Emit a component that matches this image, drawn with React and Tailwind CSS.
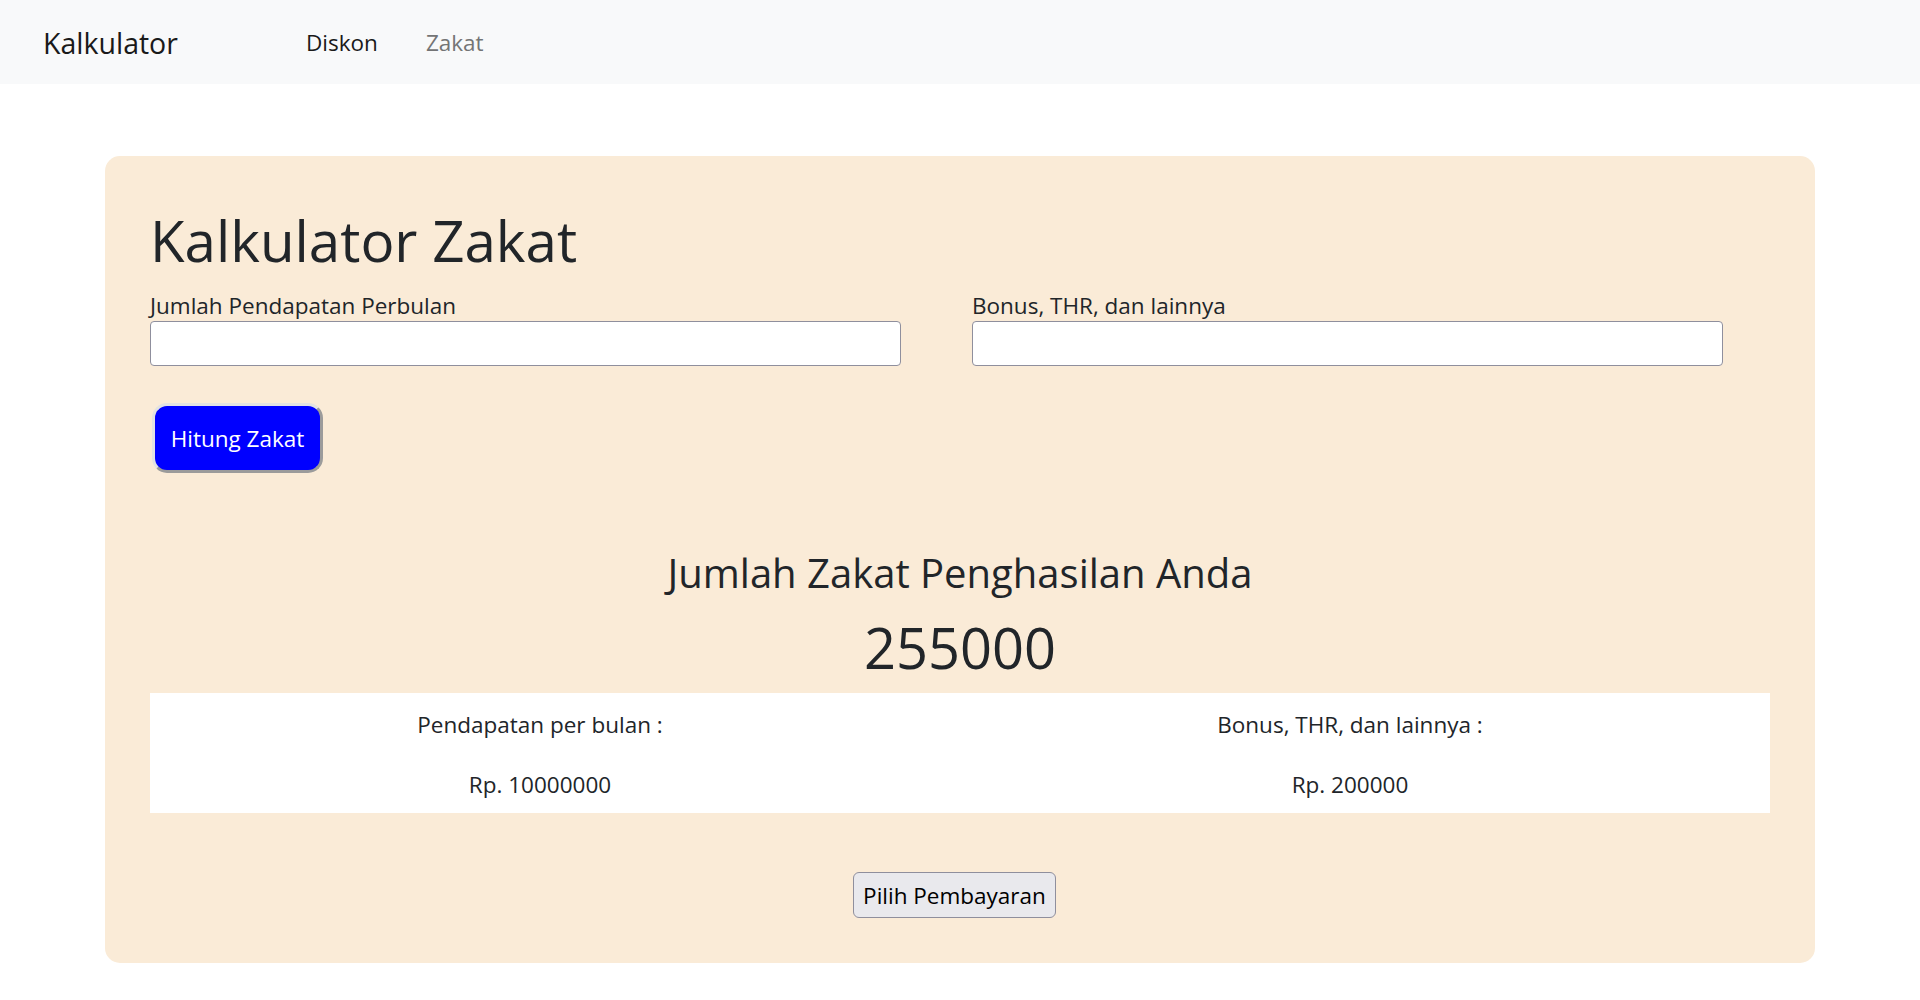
import { useState } from "react";

function App() {
  const [pendapatan, setPendapatan] = useState("");
  const [bonus, setBonus] = useState("");

  return (
    <div className="min-h-screen bg-white font-['Open_Sans',sans-serif] text-[#212529]">
      {/* navbar */}
      <nav className="flex h-[84px] items-center bg-[#f8f9fa] pl-[43px] pt-[2px]">
        <div className="w-[263px] text-[28.5px] leading-[45px] text-[#1a1a1a]">Kalkulator</div>
        <a className="text-[22.5px] leading-[36px] text-[#1a1a1a]">Diskon</a>
        <a className="ml-[48px] text-[22.5px] leading-[36px] text-[#737475]">Zakat</a>
      </nav>

      <div className="mx-auto mt-[72px] w-[1710px]">
        <div className="rounded-[15px] bg-[#faebd7] px-[45px] pt-[48px] pb-[45px]">
          <h1 className="mb-[9px] text-[56.5px] leading-[74px]">Kalkulator Zakat</h1>

          <div className="flex">
            <div className="w-[822px]">
              <label className="block h-[34px] pt-[2px] text-[22.5px] leading-[34px]">Jumlah Pendapatan Perbulan</label>
              <input
                value={pendapatan}
                onChange={(e) => setPendapatan(e.target.value)}
                className="h-[45px] w-[751px] rounded-[4px] border-[1.5px] border-[#8f8f9d] bg-white px-2 text-[22.5px]"
              />
            </div>
            <div>
              <label className="block h-[34px] pt-[2px] text-[22.5px] leading-[34px]">Bonus, THR, dan lainnya</label>
              <input
                value={bonus}
                onChange={(e) => setBonus(e.target.value)}
                className="h-[45px] w-[751px] rounded-[4px] border-[1.5px] border-[#8f8f9d] bg-white px-2 text-[22.5px]"
              />
            </div>
          </div>

          <button className="mt-[37px] ml-[2px] h-[70px] w-[171px] rounded-[15px] border-[3px] border-t-[#e2e2e2] border-l-[#e2e2e2] border-r-[#9b9b9b] border-b-[#9b9b9b] bg-[#0000ff] pt-[2px] text-[22.5px] text-white">
            Hitung Zakat
          </button>

          <div className="mt-[75px] text-center">
            <h3 className="text-[40px] leading-[50px]">Jumlah Zakat Penghasilan Anda</h3>
            <h1 className="mt-[13px] text-[56px] leading-[72px]">255000</h1>
          </div>

          <div className="mt-[10px] grid grid-cols-2 bg-white text-[22.5px] leading-[36px]">
            <div className="pt-[14px] pb-[10px] pr-[30px] text-center">Pendapatan per bulan :</div>
            <div className="pt-[14px] pb-[10px] pr-[30px] text-center">Bonus, THR, dan lainnya :</div>
            <div className="pt-[14px] pb-[10px] pr-[30px] text-center">Rp. 10000000</div>
            <div className="pt-[14px] pb-[10px] pr-[30px] text-center">Rp. 200000</div>
          </div>

          <div className="mt-[59px] flex justify-center pr-[11px]">
            <button className="h-[46px] rounded-[6px] border-[1.5px] border-[#8f8f9d] bg-[#e9e9ed] px-[9px] pt-[2px] text-[22.5px] text-black">
              Pilih Pembayaran
            </button>
          </div>
        </div>
      </div>
    </div>
  );
}

export default App;
